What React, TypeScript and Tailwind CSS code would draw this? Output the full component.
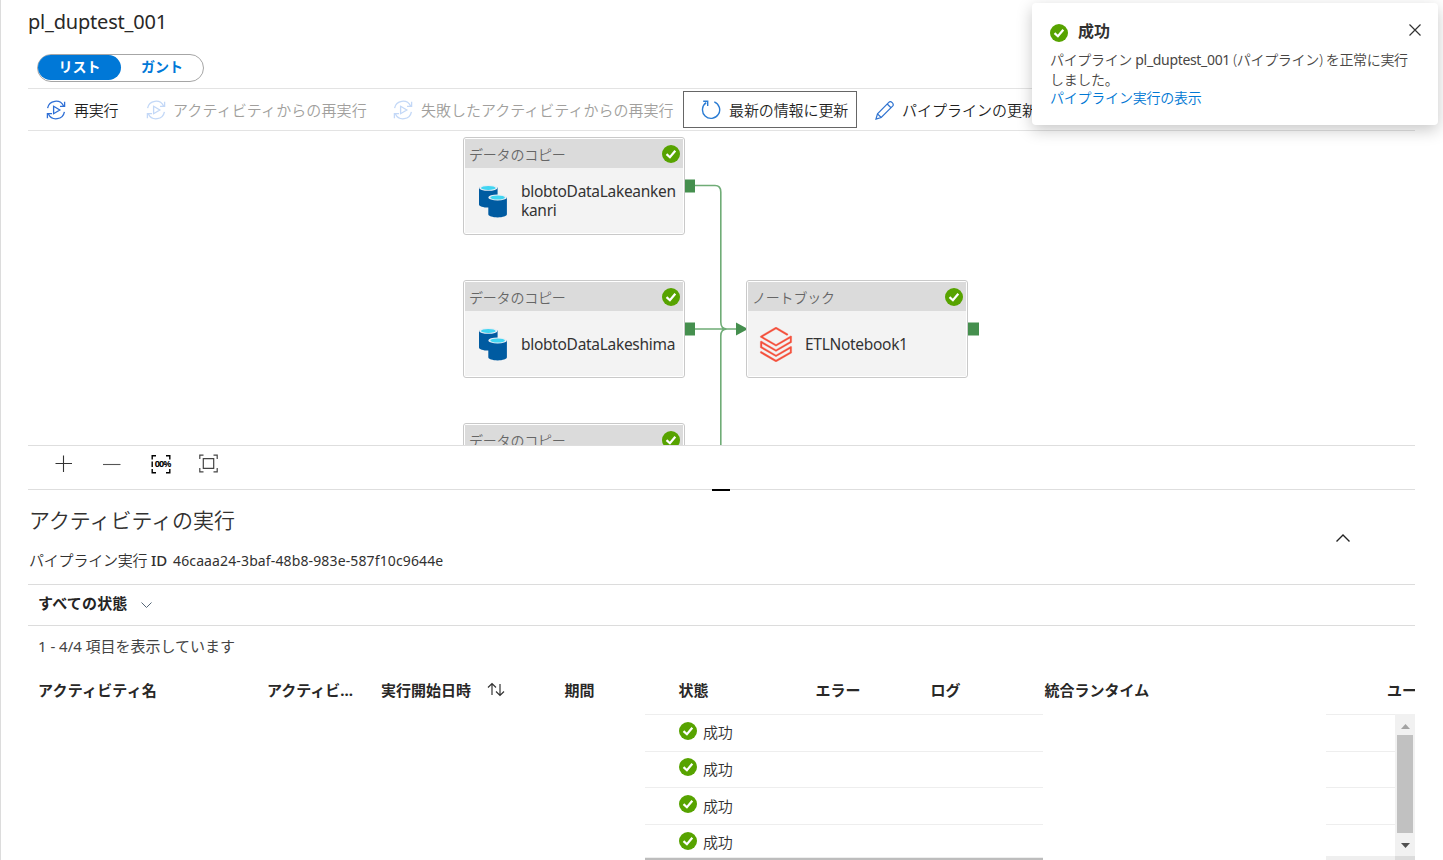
import type { ReactNode } from "react";

const SuccessIcon = () => (
  <svg width="18" height="18" viewBox="0 0 18 18" className="shrink-0">
    <circle cx="9" cy="9" r="9" fill="#57a300" />
    <path d="M4.5 9.1 7.9 12.2 13.3 5.7" fill="none" stroke="#fff" strokeWidth="2.2" />
  </svg>
);

const RerunIcon = ({ faded = false }: { faded?: boolean }) => (
  <svg
    width="20"
    height="20"
    viewBox="0 0 20 20"
    fill="none"
    stroke={faded ? "#c3d8f7" : "#2f6fd6"}
    strokeWidth="1.3"
    className="shrink-0"
  >
    <path d="M1.6 8.2A8.5 8.5 0 0 1 17.6 6M18.6 1.8V6.4H14M18.4 11.8A8.5 8.5 0 0 1 2.4 14M1.4 18.2V13.6H6" />
    <path d="M7.6 6.3 13.8 10 7.6 13.7Z" />
  </svg>
);

const CopyIcon = () => (
  <svg width="30" height="34" viewBox="0 0 30 34" className="shrink-0">
    <path d="M1 3.5V20.5C1 22.4 5.2 23.6 10.3 23.6S19.6 22.4 19.6 20.5V3.5Z" fill="#005ba1" />
    <ellipse cx="10.3" cy="3.8" rx="9.3" ry="3" fill="#e6eef4" />
    <ellipse cx="10.3" cy="3.9" rx="7.3" ry="2" fill="#40d5f2" />
    <path d="M10.3 13.3V30.3C10.3 32.2 14.5 33.4 19.6 33.4S28.9 32.2 28.9 30.3V13.3Z" fill="#005ba1" />
    <ellipse cx="19.6" cy="13.4" rx="9.3" ry="3" fill="#e6eef4" />
    <ellipse cx="19.6" cy="13.5" rx="7.3" ry="2" fill="#40d5f2" />
  </svg>
);

const NotebookIcon = () => (
  <svg width="34" height="35" viewBox="0 0 24 24" preserveAspectRatio="none" className="shrink-0">
    <path
      fill="#f4503c"
      stroke="#f4503c"
      strokeWidth="0.2"
      d="M.95 14.184L12 20.403l9.919-5.55v2.21L12 22.662l-10.484-5.96-.565.308v.77L12 24l11.05-6.218v-4.317l-.515-.309L12 19.118l-9.867-5.653v-2.21L12 16.805l11.05-6.218V6.32l-.515-.308L12 11.974 2.647 6.681 12 1.388l7.76 4.368.668-.411v-.566L12 0 .95 6.27v.72L12 13.207l9.919-5.55v2.26L12 15.52 1.516 9.56l-.565.308Z"
    />
  </svg>
);

const Node = ({ place, kind, icon, children }: { place: string; kind: string; icon: ReactNode; children?: ReactNode }) => (
  <div className={`absolute flex h-[98px] w-[222px] flex-col rounded-[3px] border border-[#c9c9c9] bg-white p-px ${place}`}>
    <div className="flex h-[29px] shrink-0 items-center justify-between bg-[#dbdbdb] pr-[3px] pl-[4px] text-[14px] tracking-[-0.2px] text-[#666]">
      <span className="pt-px">{kind}</span>
      <SuccessIcon />
    </div>
    <div className="flex flex-1 items-center bg-[#f3f3f3] pt-px pl-[13px] text-[15.5px] leading-[19px] font-normal tracking-[-0.3px] text-[#333]">
      {icon}
      {children}
    </div>
  </div>
);

const CopyNode = ({ place, lines = [] }: { place: string; lines?: string[] }) => (
  <Node place={place} kind="データのコピー" icon={<CopyIcon />}>
    <div className="ml-[13px]">
      {lines.map((line) => (
        <div key={line}>{line}</div>
      ))}
    </div>
  </Node>
);

const StatusRow = () => (
  <div className="flex h-[36.67px] shrink-0 border-t border-[#eeeeee] text-[15px]">
    <div className="flex items-center gap-[6px] pb-[4px] pl-[34px]">
      <SuccessIcon />
      <span className="pt-[3px] leading-[20px] tracking-[-0.3px]">成功</span>
    </div>
  </div>
);

const rows = [0, 1, 2, 3];

export default function App() {
  return (
    <div className="relative flex h-[860px] w-[1443px] flex-col overflow-hidden border-l border-[#dcdcdc] bg-white pr-[28px] pl-[27px] font-['Noto_Sans','Noto_Sans_CJK_JP',sans-serif] font-[350] whitespace-nowrap text-[#323130]">
      <header className="flex h-[88px] shrink-0 flex-col">
        <h1 className="mt-[8px] h-[28px] text-[20px] leading-[28px] font-normal tracking-[-0.2px] text-[#292827]">pl_duptest_001</h1>
        <div className="mt-[18px] ml-[9px] flex h-[28px] w-[167px] rounded-full border border-[#a6a6a6] text-[14px] leading-[24px] font-bold">
          <div className="h-[25px] w-[83px] rounded-full bg-[#0078d7] text-center text-white">リスト</div>
          <div className="w-[82px] text-center text-[#0078d7]">ガント</div>
        </div>
      </header>

      <nav className="flex h-[43px] shrink-0 items-center overflow-hidden border-y border-[#e3e3e3] pl-[18px] text-[15px] text-[#1f1f1f]">
        <RerunIcon />
        <span className="ml-[8px] w-[72px] pt-[2px] tracking-[-0.2px]">再実行</span>
        <RerunIcon faded />
        <span className="ml-[7px] w-[220px] pt-[2px] tracking-[0.1px] text-[#a19f9d]">アクティビティからの再実行</span>
        <RerunIcon faded />
        <span className="ml-[8px] w-[262px] pt-[2px] text-[#a19f9d]">失敗したアクティビティからの再実行</span>
        <div className="flex h-[37px] w-[174px] shrink-0 items-center border border-[#666] pl-[17px]">
          <svg width="20" height="20" viewBox="0 0 20 20" fill="none" stroke="#2b7cd3" strokeWidth="1.4">
            <path d="M13.3 1.8A8.6 8.6 0 1 1 5.2 2.7M2.2 1.3H6.7V6" />
          </svg>
          <span className="ml-[8px] pt-[2px] tracking-[-0.1px]">最新の情報に更新</span>
        </div>
        <svg width="20" height="20" viewBox="0 0 20 20" fill="none" stroke="#2f73d0" strokeWidth="1.2" className="ml-[18px] shrink-0">
          <path d="M1 19 2.5 13.8 13.8 2.3C15.8.3 19.6 4 17.6 6.1L6.2 17.5ZM2.5 13.8 6.2 17.5M12.2 4 16 7.7" />
        </svg>
        <span className="ml-[7px] pt-[2px]">パイプラインの更新</span>
      </nav>

      <section className="relative h-[314px] shrink-0 overflow-hidden">
        <svg width="1387" height="314" viewBox="28 131 1387 314" className="absolute inset-0" fill="none" stroke="#6fac76" strokeWidth="1.6">
          <path d="M694 185.5H715Q720.8 185.5 720.8 192V322Q720.8 329 727 329M694 329H738M720.8 445V336Q720.8 329 727 329" />
          <path d="M685 179.5h10v13h-10ZM685 322.5h10v13h-10ZM968 322.5h11v13h-11ZM736 322.5 748 329 736 335.5Z" fill="#458f4e" stroke="none" />
        </svg>
        <CopyNode place="left-[435px] top-[6px]" lines={["blobtoDataLakeanken", "kanri"]} />
        <CopyNode place="left-[435px] top-[149px]" lines={["blobtoDataLakeshima"]} />
        <CopyNode place="left-[435px] top-[292px]" />
        <Node place="left-[718px] top-[149px]" kind="ノートブック" icon={<span className="-ml-[2px]"><NotebookIcon /></span>}>
          <span className="ml-[12px]">ETLNotebook1</span>
        </Node>
      </section>

      <div className="flex h-[45px] shrink-0 items-center border-y border-[#dedede] pb-[8px] pl-[26px]">
        <svg width="20" height="20" viewBox="0 0 20 20" stroke="#333" strokeWidth="1.1" fill="none"><path d="M1.5 9.5H18M9.5 1.5V18" /></svg>
        <svg width="20" height="20" viewBox="0 0 20 20" stroke="#555" strokeWidth="1.1" fill="none" className="ml-[29px]"><path d="M0 10.5H17.5" /></svg>
        <div className="relative ml-[28px] flex size-[20px] items-center justify-center font-['Noto_Sans',sans-serif] text-[9px] leading-[10px] font-bold tracking-[-0.9px] text-black">
          <svg width="20" height="20" viewBox="0 0 20 20" stroke="#000" strokeWidth="1.4" fill="none" className="absolute inset-0"><path d="M5 1.7H1.2V5.5M15 1.7H18.8V5.5M1.2 15V18.8H5M18.8 15V18.8H15M1.2 7.5V13" /></svg>
          <span className="pt-px pl-[3px]">00%</span>
        </div>
        <svg width="20" height="20" viewBox="0 0 20 20" stroke="#444" strokeWidth="1.2" fill="none" className="ml-[28px]"><path d="M4.5 1.2H.8V5M14.5 1.2H18.2V5M.8 14V17.8H4.5M18.2 14V17.8H14.5M4.3 4.7H14.7V14.3H4.3Z" /></svg>
      </div>
      <div className="-mt-px ml-[684px] h-[2px] w-[18px] shrink-0 bg-black" />

      <section className="flex h-[94px] shrink-0 items-start justify-between border-b border-[#dcdcdc]">
        <div className="pt-[13px] pl-px">
          <h2 className="text-[21px] leading-[32px] tracking-[-0.05px]">アクティビティの実行</h2>
          <p className="mt-[13px] flex text-[15px] leading-[22px]">
            <span className="tracking-[-0.2px]">パイプライン実行 <span className="font-medium">ID</span></span>
            <span className="ml-[6px] pt-px text-[14px] font-normal tracking-[0.13px]">46caaa24-3baf-48b8-983e-587f10c9644e</span>
          </p>
        </div>
        <svg width="14" height="8" viewBox="0 0 14 8" fill="none" stroke="#222" strokeWidth="1.4" className="mt-[43px] mr-[65px]"><path d="M.5 7.5 7 1 13.5 7.5" /></svg>
      </section>

      <div className="flex h-[41px] shrink-0 items-center border-b border-[#dcdcdc] pb-[3px] pl-[10px] text-[15px] font-bold tracking-[0.2px] text-[#242424]">
        すべての状態
        <svg width="11" height="7" viewBox="0 0 11 7" fill="none" stroke="#567" strokeWidth="1" className="mt-[3px] ml-[13px]"><path d="M.5.5 5.5 5.5 10.5.5" /></svg>
      </div>
      <div className="h-[42px] shrink-0 pl-[10px] text-[15px] leading-[41px] font-normal tracking-[-0.03px] text-[#444]">1 - 4/4 項目を表示しています</div>

      <div className="flex h-[46px] shrink-0 overflow-hidden pl-[10px] text-[15px] leading-[45px] font-bold text-[#292827]">
        <span className="w-[229px] shrink-0 tracking-[0.2px]">アクティビティ名</span>
        <span className="w-[114px] shrink-0">アクティビ...</span>
        <span className="flex h-[45px] w-[183.5px] shrink-0 items-center">
          実行開始日時
          <svg width="18" height="15" viewBox="0 0 18 15" fill="none" stroke="#333" strokeWidth="1.2" className="mt-[-2px] ml-[16px]"><path d="M5 13V1.5M1 5.5 5 1.5 9 5.5M13 2V13.5M9 9.5 13 13.5 17 9.5" /></svg>
        </span>
        <span className="w-[114px] shrink-0">期間</span>
        <span className="w-[137px] shrink-0">状態</span>
        <span className="w-[115px] shrink-0">エラー</span>
        <span className="w-[114px] shrink-0">ログ</span>
        <span className="w-[342.5px] shrink-0">統合ランタイム</span>
        <span className="shrink-0">ユー</span>
      </div>

      <div className="flex h-[146px] shrink-0 overflow-hidden">
        <div className="ml-[617px] flex w-[398px] flex-col">
          {rows.map((r) => <StatusRow key={r} />)}
        </div>
        <div className="ml-[283px] flex w-[69px] flex-col">
          {rows.map((r) => <div key={r} className="h-[36.67px] shrink-0 border-t border-[#eeeeee]" />)}
        </div>
        <div className="flex w-[20px] flex-col items-center bg-[#f1f1f1]">
          <svg width="9" height="5" viewBox="0 0 9 5" className="mt-[10px] shrink-0"><path d="M0 5 4.5 0 9 5Z" fill="#a3a3a3" /></svg>
          <div className="mt-[6px] h-[98px] w-[16px] shrink-0 bg-[#c1c1c1]" />
          <svg width="9" height="5" viewBox="0 0 9 5" className="mt-[10px] shrink-0"><path d="M0 0 4.5 5 9 0Z" fill="#505050" /></svg>
        </div>
      </div>
      <div className="absolute bottom-0 left-[644px] h-[3px] w-[398px] border-t border-[#eee] bg-[#bdbdbd]" />
      <div className="absolute bottom-0 left-[1325px] flex h-[4px] w-[89px] bg-[#efefef]"><div className="ml-auto w-[20px] bg-[#dcdcdc]" /></div>

      <aside className="absolute top-[3px] left-[1031px] h-[122px] w-[406px] rounded-[4px] bg-white px-[18px] pt-[16px] text-[14px] shadow-[0_5px_16px_rgba(0,0,0,0.22)]">
        <div className="flex items-center">
          <div className="pt-[4px]"><SuccessIcon /></div>
          <span className="ml-[10px] text-[16px] leading-[24px] font-bold">成功</span>
          <svg width="12" height="12" viewBox="0 0 12 12" stroke="#333" strokeWidth="1.2" className="mt-[-2px] mr-[-1px] ml-auto"><path d="M.5.5 11.5 11.5M11.5.5.5 11.5" /></svg>
        </div>
        <p className="mt-[7px] leading-[20px] tracking-[-0.33px] text-[#484644]">
          パイプライン <span className="font-normal">pl_duptest_001</span> (パイプライン) を正常に実行
          <br />
          しました。
        </p>
        <a className="-mt-px block leading-[17px] tracking-[-0.22px] text-[#0078d4]">パイプライン実行の表示</a>
      </aside>
    </div>
  );
}
